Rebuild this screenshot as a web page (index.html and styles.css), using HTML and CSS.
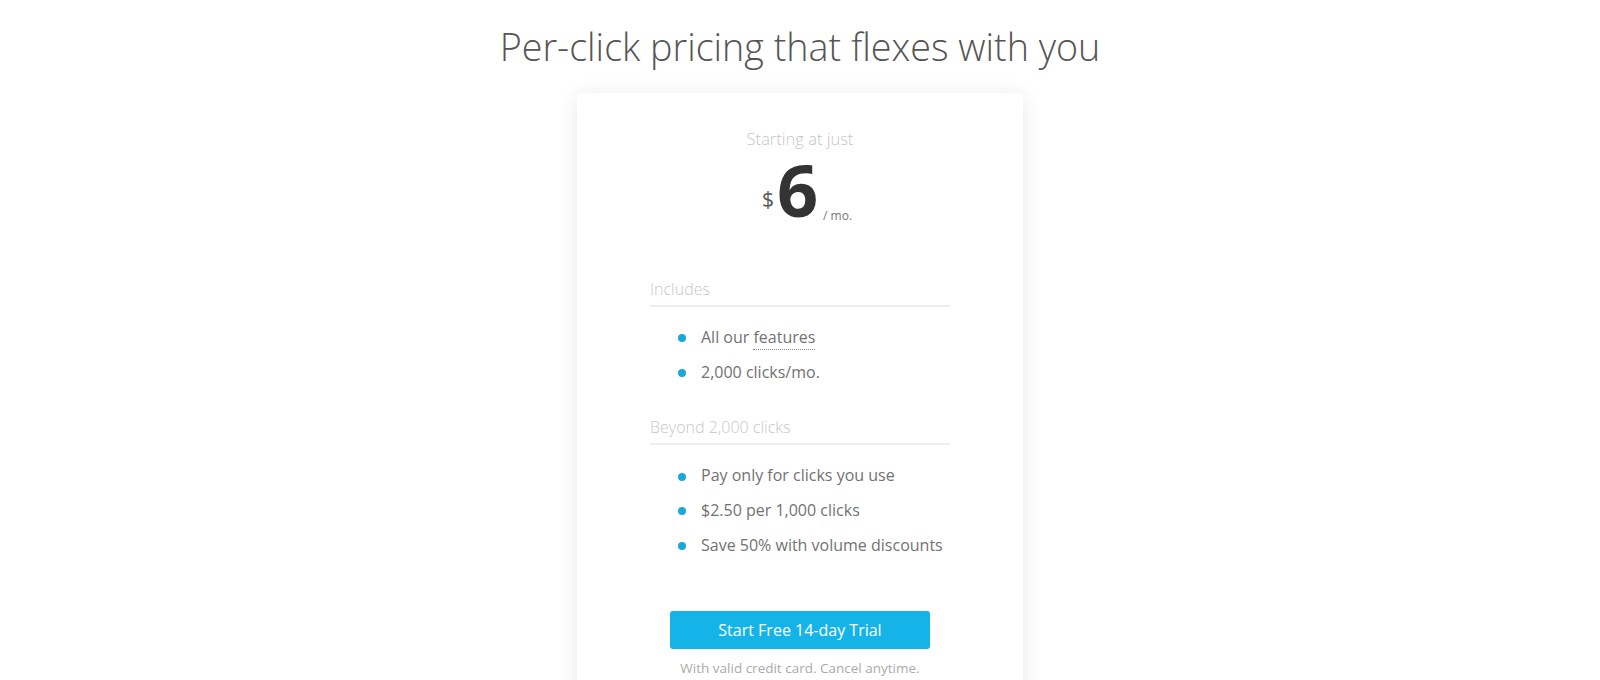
FILE: index.html
```html
<!DOCTYPE html>
<html lang="en">
<head>
<meta charset="utf-8">
<title>Pricing</title>
<link rel="stylesheet" href="styles.css">
</head>
<body>
<main class="page">
  <h1 class="title">Per-click pricing that flexes with you</h1>
  <section class="card">
    <p class="lead">Starting at just</p>
    <div class="price"><span class="currency">$</span><span class="amount">6</span><span class="period">/ mo.</span></div>

    <div class="group group-first">
      <h2 class="group-head">Includes</h2>
      <ul class="items">
        <li>All our <a class="dotted" href="#">features</a></li>
        <li>2,000 clicks/mo.</li>
      </ul>
    </div>

    <div class="group">
      <h2 class="group-head">Beyond 2,000 clicks</h2>
      <ul class="items">
        <li>Pay only for clicks you use</li>
        <li>$2.50 per 1,000 clicks</li>
        <li>Save 50% with volume discounts</li>
      </ul>
    </div>

    <div class="cta">
      <a class="btn" href="#">Start Free 14-day Trial</a>
      <p class="note">With valid credit card. Cancel anytime.</p>
    </div>
  </section>
</main>
</body>
</html>
```
FILE: styles.css
```css
html, body {
  margin: 0;
  padding: 0;
  background: #ffffff;
}
body {
  font-family: "Open Sans", "Liberation Sans", sans-serif;
  color: #666;
}
.page {
  display: flex;
  flex-direction: column;
  align-items: center;
}
.title {
  margin: 24px 0 0;
  font-size: 37.7px;
  line-height: 46px;
  font-weight: 300;
  color: #555;
  letter-spacing: 0;
}
.card {
  margin-top: 23px;
  width: 446px;
  box-sizing: border-box;
  padding: 34px 0 120px;
  background: #fff;
  border-radius: 5px;
  box-shadow: 0 2px 22px rgba(0, 0, 0, 0.09);
  display: flex;
  flex-direction: column;
  align-items: center;
}
.lead {
  margin: 0;
  font-size: 16.5px;
  line-height: 24px;
  font-weight: 300;
  color: #c6c6c6;
}
.price {
  margin-top: 2px;
  padding-left: 14px;
  font-size: 72px;
  line-height: 72px;
  height: 72px;
  color: #333;
  white-space: nowrap;
}
.currency {
  font-size: 21px;
  line-height: 1;
  font-weight: 400;
  color: #555;
  vertical-align: 10px;
  margin-right: 3px;
}
.amount {
  font-size: 72px;
  line-height: 1;
  font-weight: 700;
  color: #333;
}
.period {
  font-size: 12px;
  line-height: 1;
  font-weight: 400;
  color: #777;
  vertical-align: -3px;
  margin-left: 5px;
}
.group {
  width: 300px;
  margin-top: 26px;
}
.group-first {
  margin-top: 52px;
}
.group-head {
  margin: 0;
  padding-bottom: 4px;
  font-size: 16px;
  line-height: 24px;
  font-weight: 300;
  color: #c8c8c8;
  border-bottom: 2px solid #eeeeee;
}
.items {
  list-style: none;
  margin: 13px 0 0;
  padding: 0;
}
.items li {
  position: relative;
  padding-left: 51px;
  font-size: 16px;
  line-height: 34.7px;
  color: #727272;
}
.items li::before {
  content: "";
  position: absolute;
  left: 28px;
  top: 50%;
  width: 8px;
  height: 8px;
  margin-top: -3px;
  border-radius: 50%;
  background: #1aa9d6;
}
.dotted {
  color: #727272;
  text-decoration: none;
  border-bottom: 1px dotted #888;
  padding-bottom: 1px;
}
.cta {
  margin-top: 48px;
  display: flex;
  flex-direction: column;
  align-items: center;
}
.btn {
  display: block;
  width: 260px;
  height: 38px;
  line-height: 38px;
  text-align: center;
  background: #15b4e8;
  color: #fff;
  font-size: 16px;
  text-decoration: none;
  border-radius: 3px;
}
.note {
  margin: 9px 0 0;
  font-size: 13.5px;
  line-height: 20px;
  color: #aaa;
}
```
